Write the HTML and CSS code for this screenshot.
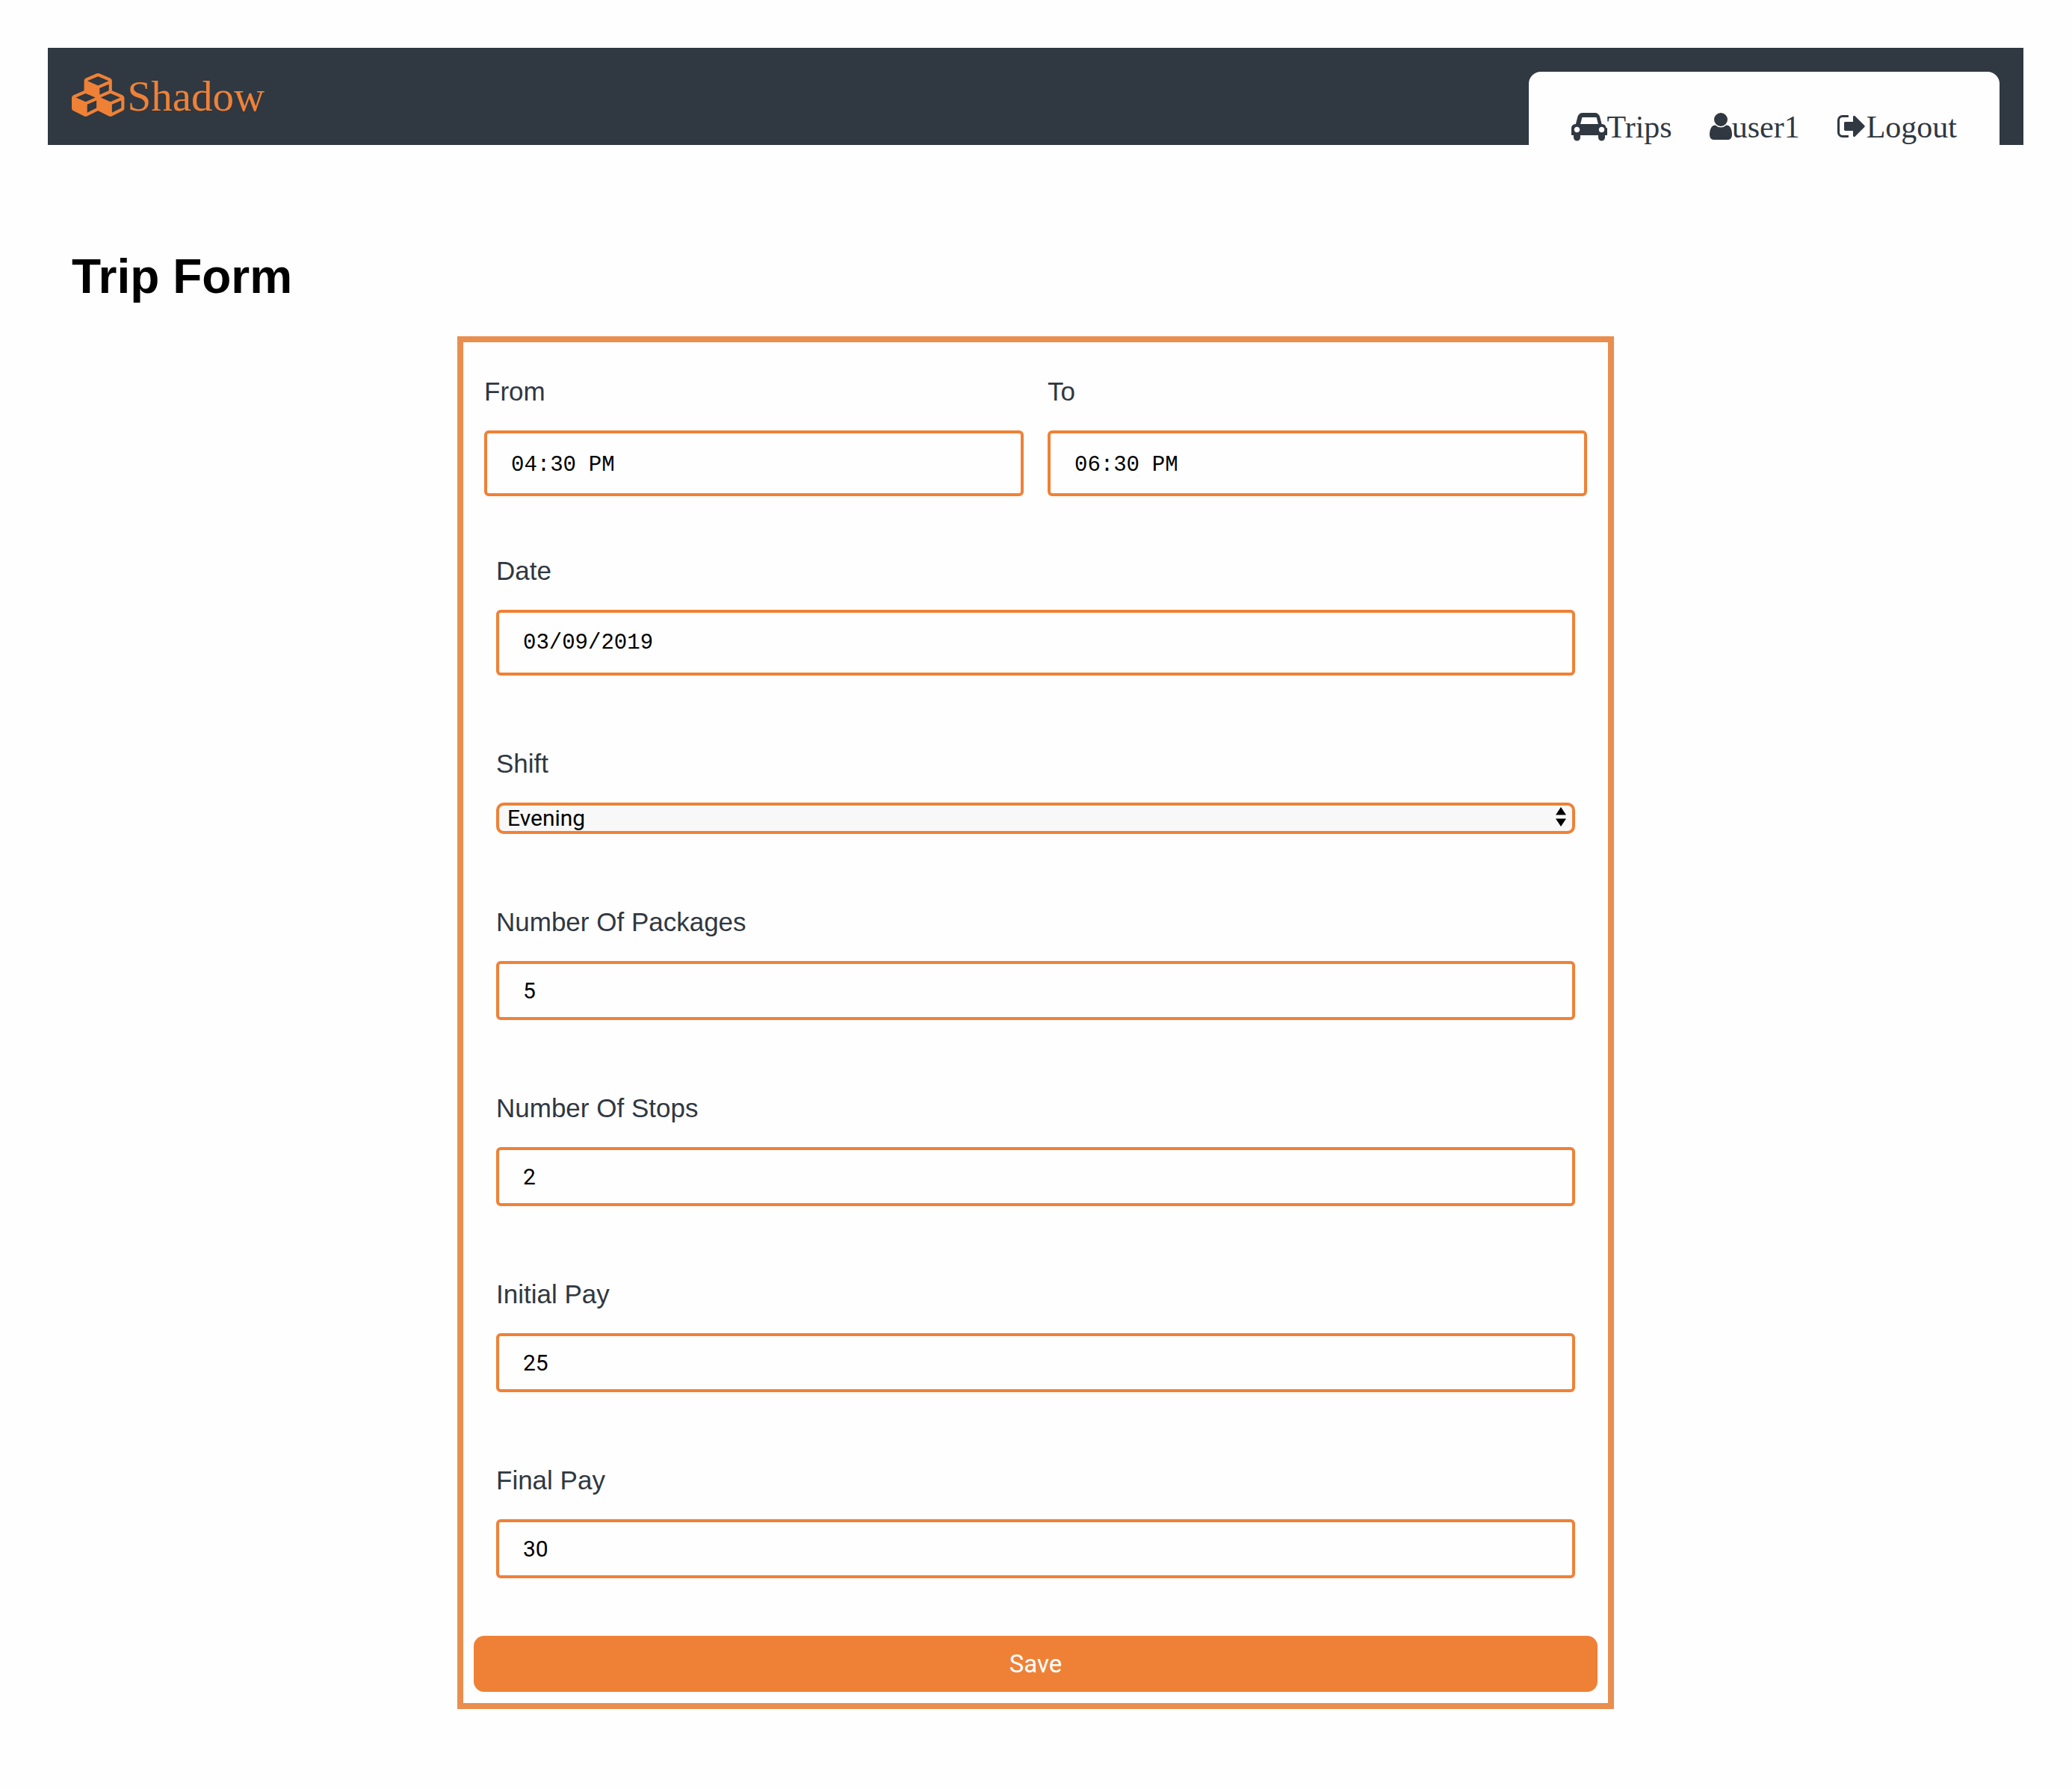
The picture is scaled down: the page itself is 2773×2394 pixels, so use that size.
FILE: index.html
```html
<!DOCTYPE html>
<html lang="en-US">
<head>
  <meta charset="utf-8">
  <meta name="viewport" content="width=device-width, initial-scale=1">
  <title>Shadow - Trip Form</title>
  <link rel="stylesheet" href="styles.css">
</head>
<body>
  <header class="header">
    <a class="brand" href="#"><svg class="brand-icon" viewBox="0 0 2304 1792" aria-hidden="true"><path d="M640 1632l384-192v-314l-384 164v342zm-64-454l404-173-404-173-404 173zm1088 454l384-192v-314l-384 164v342zm-64-454l404-173-404-173-404 173zm-448-293l384-165v-266l-384 164v267zm-64-379l441-189-441-189-441 189zm1088 518v416q0 36-19 67t-52 47l-448 224q-25 14-57 14t-57-14l-448-224q-4-2-7-4-2 2-7 4l-448 224q-25 14-57 14t-57-14l-448-224q-33-16-52-47t-19-67v-416q0-38 21.500-70t56.500-48l434-186v-400q0-38 21.500-70t56.500-48l448-192q23-10 50-10t50 10l448 192q35 16 56.500 48t21.500 70v400l434 186q36 16 57 48t21 70z"/></svg>Shadow</a>
    <nav class="nav">
      <a class="nav-link" href="#"><svg class="nav-icon" viewBox="0 0 2048 1792" aria-hidden="true"><path d="M480 1088q0-66-47-113t-113-47-113 47-47 113 47 113 113 47 113-47 47-113zm36-320h1016l-89-357q-2-8-14-17.500t-21-9.500h-768q-9 0-21 9.500t-14 17.500zm1372 320q0-66-47-113t-113-47-113 47-47 113 47 113 113 47 113-47 47-113zm160-96v384q0 14-9 23t-23 9h-96v128q0 80-56 136t-136 56-136-56-56-136v-128h-1024v128q0 80-56 136t-136 56-136-56-56-136v-128h-96q-14 0-23-9t-9-23v-384q0-93 65.500-158.500t158.500-65.500h28l105-419q23-94 104-157.500t179-63.500h704q98 0 179 63.500t104 157.500l105 419h28q93 0 158.500 65.500t65.500 158.500z"/></svg>Trips</a>
      <a class="nav-link" href="#"><svg class="nav-icon" viewBox="256 0 1280 1792" aria-hidden="true"><path d="M1536 1399q0 109-62.500 187t-150.500 78h-854q-88 0-150.500-78t-62.500-187q0-85 8.500-160.500t31.500-152 58.500-131 94-89 134.500-34.500q131 128 313 128t313-128q76 0 134.500 34.500t94 89 58.500 131 31.500 152 8.500 160.500zm-256-887q0 159-112.500 271.500t-271.500 112.500-271.500-112.500-112.500-271.500 112.500-271.500 271.500-112.500 271.500 112.500 112.500 271.500z"/></svg>user1</a>
      <a class="nav-link" href="#"><svg class="nav-icon" viewBox="64 0 1664 1792" aria-hidden="true"><path d="M704 1440q0 4 1 20t.5 26.500-3 23.500-10 19.500-20.500 6.500h-320q-119 0-203.500-84.500t-84.500-203.500v-704q0-119 84.500-203.500t203.500-84.500h320q13 0 22.500 9.500t9.500 22.500q0 4 1 20t.5 26.500-3 23.500-10 19.500-20.500 6.500h-320q-66 0-113 47t-47 113v704q0 66 47 113t113 47h312l11.500 1 11.500 3 8 5.500 7 9 2 13.500zm928-544q0 26-19 45l-544 544q-19 19-45 19t-45-19-19-45v-288h-448q-26 0-45-19t-19-45v-384q0-26 19-45t45-19h448v-288q0-26 19-45t45-19 45 19l544 544q19 19 19 45z"/></svg>Logout</a>
    </nav>
  </header>

  <main>
    <h1 class="title">Trip Form</h1>
    <form class="form">
      <div class="row">
        <div class="field">
          <label class="label" for="from">From</label>
          <input class="input input-time" type="time" id="from" value="16:30">
        </div>
        <div class="field">
          <label class="label" for="to">To</label>
          <input class="input input-time" type="time" id="to" value="18:30">
        </div>
      </div>
      <div class="fields">
        <div class="field">
          <label class="label" for="date">Date</label>
          <input class="input input-date" type="date" id="date" value="2019-03-09">
        </div>
        <div class="field">
          <label class="label" for="shift">Shift</label>
          <div class="select-wrap">
            <select class="select" id="shift">
              <option>Morning</option>
              <option selected>Evening</option>
            </select>
            <svg class="select-arrows" viewBox="0 0 14 26" aria-hidden="true"><path d="M7 0l7 10.500H0zM7 26L0 15.500h14z"/></svg>
          </div>
        </div>
        <div class="field">
          <label class="label" for="packages">Number Of Packages</label>
          <input class="input" type="number" id="packages" value="5">
        </div>
        <div class="field">
          <label class="label" for="stops">Number Of Stops</label>
          <input class="input" type="number" id="stops" value="2">
        </div>
        <div class="field">
          <label class="label" for="initial-pay">Initial Pay</label>
          <input class="input" type="number" id="initial-pay" value="25">
        </div>
        <div class="field">
          <label class="label" for="final-pay">Final Pay</label>
          <input class="input" type="number" id="final-pay" value="30">
        </div>
      </div>
      <button class="save" type="submit">Save</button>
    </form>
  </main>
</body>
</html>
```
FILE: styles.css
```css
:root {
  --dark: #303841;
  --orange: #ef8137;
  --frame: #e98e4f;
  --page: #fefefe;
}

* {
  box-sizing: border-box;
}

body {
  margin: 0;
  padding: 64px 65px 64px 64px;
  background: var(--page);
  color: #000;
  font-family: "Liberation Sans", Arial, sans-serif;
}

.header {
  display: flex;
  justify-content: space-between;
  padding: 32px 32px 0;
  background: var(--dark);
  font-family: "Liberation Serif", "Times New Roman", serif;
}

.brand {
  color: var(--orange);
  font-size: 57px;
  line-height: 66px;
  text-decoration: none;
  white-space: nowrap;
}

.brand-icon {
  height: 58px;
  vertical-align: -8px;
  fill: currentColor;
}

.nav {
  display: flex;
  gap: 50px;
  padding: 51px 57px 0;
  border-radius: 16px 16px 0 0;
  background: var(--page);
}

.nav-link {
  color: var(--dark);
  font-size: 42px;
  line-height: 47px;
  text-decoration: none;
  white-space: nowrap;
}

.nav-icon {
  height: 42px;
  vertical-align: -6px;
  fill: currentColor;
}

.title {
  margin: 139px 32px 43px;
  font-size: 64px;
  line-height: 74px;
}

.form {
  display: flex;
  flex-direction: column;
  max-width: 1548px;
  margin: 0 auto;
  padding: 46px 14px 15px;
  border: 8px solid var(--frame);
}

.row {
  display: grid;
  grid-template-columns: 1fr 1fr;
  gap: 32px;
  margin-bottom: 80px;
  padding: 0 14px;
}

.fields {
  display: flex;
  flex-direction: column;
  gap: 98px;
  margin-bottom: 77px;
  padding: 0 30px;
}

.field {
  display: flex;
  flex-direction: column;
  gap: 32px;
}

.label {
  color: var(--dark);
  font-size: 35px;
  line-height: 40px;
}

.input {
  width: 100%;
  height: 79px;
  margin: 0;
  padding: 0 32px;
  border: 4px solid var(--orange);
  border-radius: 6px;
  background: var(--page);
  color: #000;
  font-family: Roboto, sans-serif;
  font-size: 30px;
  appearance: textfield;
}

.input::-webkit-inner-spin-button {
  display: none;
}

.input-time,
.input-date {
  height: 88px;
  font-family: "Liberation Mono", "Courier New", monospace;
  font-size: 29px;
}

.input-time {
  padding-top: 4px;
}

.input::-webkit-calendar-picker-indicator {
  display: none;
}

.input::-webkit-datetime-edit,
.input::-webkit-datetime-edit-fields-wrapper,
.input::-webkit-datetime-edit-hour-field,
.input::-webkit-datetime-edit-minute-field,
.input::-webkit-datetime-edit-day-field,
.input::-webkit-datetime-edit-month-field,
.input::-webkit-datetime-edit-year-field {
  padding: 0;
}

.input::-webkit-datetime-edit-ampm-field {
  padding: 0 0 0 8px;
}

.select-wrap {
  position: relative;
  display: flex;
}

.select {
  width: 100%;
  height: 42px;
  margin: 0;
  padding: 0 40px 0 11px;
  border: 4px solid var(--orange);
  border-radius: 10px;
  background: #f8f8f8;
  color: #000;
  font-family: Roboto, sans-serif;
  font-size: 30px;
  line-height: 34px;
  appearance: none;
}

.select-arrows {
  position: absolute;
  top: 6px;
  right: 12px;
  width: 14px;
  height: 26px;
  pointer-events: none;
}

.save {
  height: 75px;
  border: 0;
  border-radius: 14px;
  background: var(--orange);
  color: #fff;
  font-family: Roboto, sans-serif;
  font-size: 33px;
}
```
